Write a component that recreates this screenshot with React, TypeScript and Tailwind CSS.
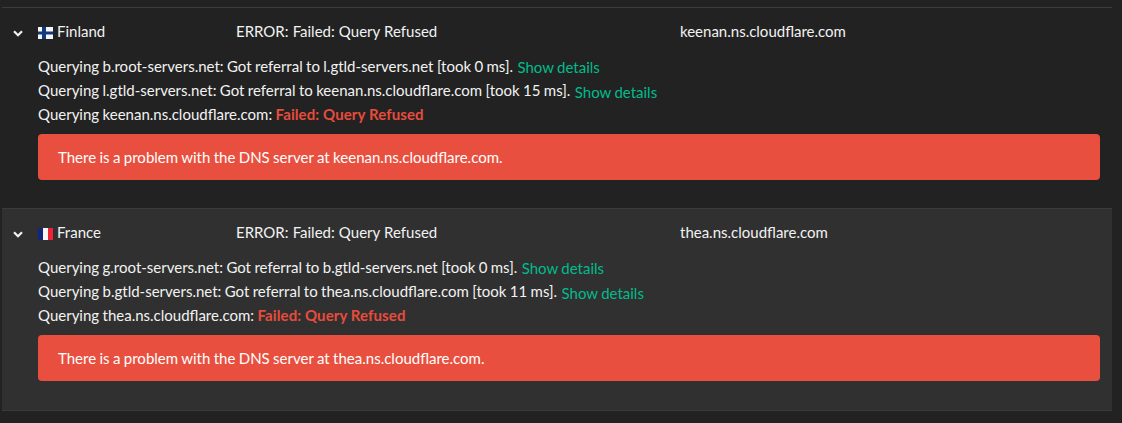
const FONT = "font-['Lato','Noto_Sans',sans-serif]";

type ResultRow = {
  country: string;
  flag: "fi" | "fr";
  server: string;
  hops: string[];
  lastQuery: string;
  striped: boolean;
};

const rows: ResultRow[] = [
  {
    country: "Finland",
    flag: "fi",
    server: "keenan.ns.cloudflare.com",
    hops: [
      "Querying b.root-servers.net: Got referral to l.gtld-servers.net [took 0 ms].",
      "Querying l.gtld-servers.net: Got referral to keenan.ns.cloudflare.com [took 15 ms].",
    ],
    lastQuery: "Querying keenan.ns.cloudflare.com:",
    striped: false,
  },
  {
    country: "France",
    flag: "fr",
    server: "thea.ns.cloudflare.com",
    hops: [
      "Querying g.root-servers.net: Got referral to b.gtld-servers.net [took 0 ms].",
      "Querying b.gtld-servers.net: Got referral to thea.ns.cloudflare.com [took 11 ms].",
    ],
    lastQuery: "Querying thea.ns.cloudflare.com:",
    striped: true,
  },
];

function Flag({ code }: { code: "fi" | "fr" }) {
  if (code === "fi") {
    return (
      <svg width="15" height="12" viewBox="0 0 15 12" className="mt-[4px] block shrink-0">
        <rect width="15" height="12" fill="#f4f6f8" />
        <rect x="4" width="4" height="12" fill="#123a7c" />
        <rect y="4.5" width="15" height="3" fill="#123a7c" />
      </svg>
    );
  }
  return (
    <svg width="15" height="12" viewBox="0 0 15 12" className="mt-[4px] block shrink-0">
      <rect width="5" height="12" fill="#12277c" />
      <rect x="5" width="5" height="12" fill="#f6f6f6" />
      <rect x="10" width="5" height="12" fill="#ee2436" />
    </svg>
  );
}

function Chevron() {
  return (
    <svg width="10" height="7" viewBox="0 0 10 7" className="block">
      <path d="M1 1.2 5 5.2 9 1.2" fill="none" stroke="#f2f2f2" strokeWidth="2.2" />
    </svg>
  );
}

function Row({ row }: { row: ResultRow }) {
  return (
    <div
      className={`border-t border-t-[#3b3b3b] ${
        row.striped ? "bg-[#303030] pb-[29px]" : "bg-[#222222] pb-[28px]"
      }`}
    >
      <div className="flex h-[46px] items-center text-[#f2f2f2]">
        <div className="mt-[4px] flex w-[36px] pl-[11px]">
          <Chevron />
        </div>
        <div className="flex w-[198px] items-center gap-[4px]">
          <Flag code={row.flag} />
          <span>{row.country}</span>
        </div>
        <div className="w-[444px] [word-spacing:0.3px]">ERROR: Failed: Query Refused</div>
        <div>{row.server}</div>
      </div>
      <div className="pl-[36px] pr-[12px] [word-spacing:-0.45px]">
        {row.hops.map((hop, i) => (
          <div key={hop} className="h-[24px] leading-[24px] text-[#f2f2f2]">
            {hop}{" "}
            <span
              className={`relative ml-[1px] text-[#00bc8c] ${i === 0 ? "top-[1px]" : "top-[2px]"}`}
            >
              Show details
            </span>
          </div>
        ))}
        <div className="h-[24px] leading-[24px] text-[#f2f2f2]">
          {row.lastQuery}{" "}
          <span className="font-bold tracking-[0.1px] text-[#e74c3c] [word-spacing:0]">
            Failed: Query Refused
          </span>
        </div>
        <div className="mt-[8px] flex h-[46px] items-center rounded-[4px] bg-[#e94f3e] px-[20px] text-white">
          There is a problem with the DNS server at {row.server}.
        </div>
      </div>
    </div>
  );
}

export default function App() {
  return (
    <div className={`${FONT} h-[423px] overflow-hidden bg-[#222222] pl-[2px] pr-[10px] pt-[7px] text-[15px]`}>
      {rows.map((row) => (
        <Row key={row.country} row={row} />
      ))}
      <div className="border-t border-[#3b3b3b]" />
    </div>
  );
}
